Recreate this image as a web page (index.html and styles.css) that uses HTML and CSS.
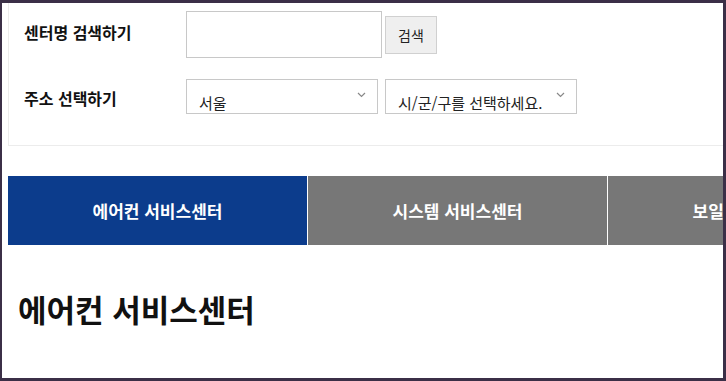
FILE: index.html
```html
<!DOCTYPE html>
<html lang="ko">
<head>
  <meta charset="UTF-8" />
  <meta name="viewport" content="width=device-width, initial-scale=1" />
  <title>서비스센터 찾기</title>
  <link rel="stylesheet" href="styles.css">
</head>
<body>

  <div class="page">

    <div class="search-panel">
      <div class="search-row">
        <label class="search-label" for="centerName">센터명 검색하기</label>
        <div class="search-fields">
          <input class="search-input" id="centerName" type="text" />
          <button class="search-button" type="button">검색</button>
        </div>
      </div>

      <div class="search-row">
        <span class="search-label">주소 선택하기</span>
        <div class="search-fields wide-gap">
          <div class="select-box">
            <select class="address-select">
              <option>서울</option>
            </select>
            <svg class="chevron" width="9" height="6" viewBox="0 0 9 6"><path d="M1 1l3.5 3.5L8 1" fill="none" stroke="#888" stroke-width="1.2"/></svg>
          </div>
          <div class="select-box">
            <select class="address-select">
              <option>시/군/구를 선택하세요.</option>
            </select>
            <svg class="chevron" width="9" height="6" viewBox="0 0 9 6"><path d="M1 1l3.5 3.5L8 1" fill="none" stroke="#888" stroke-width="1.2"/></svg>
          </div>
        </div>
      </div>
    </div>

    <ul class="tabs">
      <li class="tab active">에어컨 서비스센터</li>
      <li class="tab">시스템 서비스센터</li>
      <li class="tab">보일러 서비스센터</li>
    </ul>

    <h2 class="section-title">에어컨 서비스센터</h2>

  </div>

</body>
</html>
```

FILE: styles.css
```css
html, body {
  margin: 0;
  padding: 0;
}

body {
  background: #3b2f47;
  height: 381px;
  box-sizing: border-box;
  padding: 3px 3px 3px 2px;
  font-family: "Noto Sans CJK KR", "Noto Sans", sans-serif;
  color: #111;
  overflow: hidden;
}

.page {
  background: #fff;
  height: 100%;
  overflow: hidden;
  padding-left: 6px;
}

.search-panel {
  width: 1000px;
  border: 1px solid #ececec;
  border-top: 0;
  padding: 8px 0 31px 15px;
  display: flex;
  flex-direction: column;
  gap: 21px;
}

.search-row {
  display: flex;
  align-items: center;
}

.search-label {
  width: 162px;
  font-size: 16px;
  font-weight: bold;
  margin-top: -6px;
}

.search-row + .search-row .search-label {
  margin-top: 2px;
}

.search-fields {
  display: flex;
  align-items: center;
  gap: 3px;
}

.search-fields.wide-gap {
  gap: 7px;
}

.search-input {
  width: 196px;
  height: 47px;
  box-sizing: border-box;
  border: 1px solid #c8c8c8;
  margin: 0;
  padding: 0 8px;
  font-family: inherit;
}

.search-button {
  width: 52px;
  height: 38px;
  background: #efefef;
  border: 1px solid #d0d0d0;
  border-radius: 0;
  font-family: inherit;
  font-size: 14px;
  color: #222;
  padding: 0;
  margin: 0;
}

.select-box {
  position: relative;
}

.address-select {
  appearance: none;
  -webkit-appearance: none;
  width: 192px;
  height: 35px;
  box-sizing: border-box;
  border: 1px solid #c8c8c8;
  border-radius: 0;
  background: #fff;
  font-family: inherit;
  font-size: 15px;
  color: #222;
  padding: 11px 20px 0 12px;
  margin: 0;
}

.chevron {
  position: absolute;
  right: 12px;
  top: 13px;
  pointer-events: none;
}

.tabs {
  list-style: none;
  margin: 30px 0 0;
  padding: 0;
  display: flex;
  width: 1000px;
}

.tab {
  width: 299px;
  height: 69px;
  flex: none;
  border-right: 1px solid #fff;
  background: #777;
  color: #fff;
  font-size: 17px;
  font-weight: bold;
  display: flex;
  align-items: center;
  justify-content: center;
}

.tab.active {
  background: #0c3c8c;
}

.section-title {
  margin: 41px 0 0 10px;
  font-size: 31px;
  font-weight: bold;
}
```
